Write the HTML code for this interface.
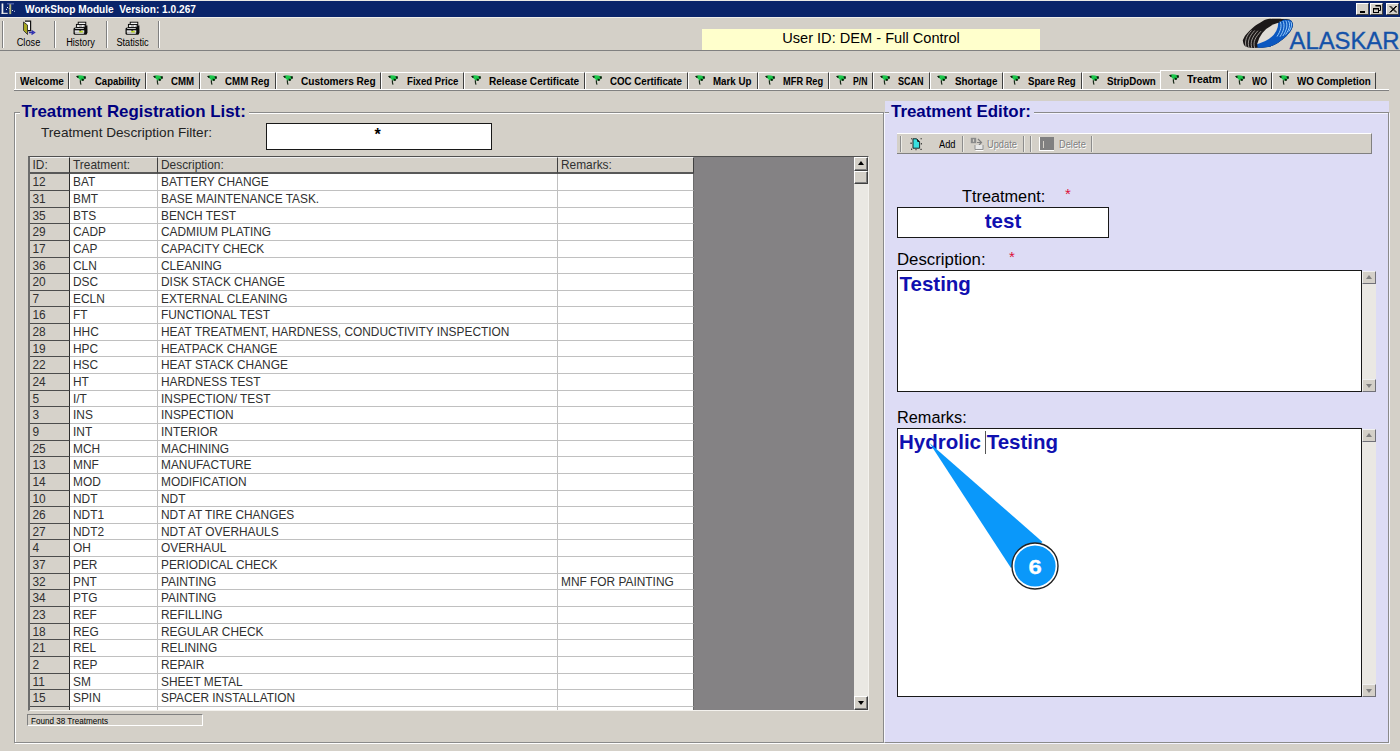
<!DOCTYPE html>
<html>
<head>
<meta charset="utf-8">
<title>WorkShop Module</title>
<style>
html,body{margin:0;padding:0;}
body{width:1400px;height:751px;overflow:hidden;background:#d4d0c8;font-family:"Liberation Sans",sans-serif;position:relative;color:#000;}
.abs{position:absolute;}
#titlebar{left:0;top:0;width:1400px;height:18px;background:#0a246a;border-top:1px solid #eceae6;border-bottom:1px solid #f0eeea;box-sizing:border-box;}
#titletext{left:25px;top:2.5px;font-size:10.9px;font-weight:bold;color:#fff;line-height:13px;white-space:nowrap;transform:scaleX(0.93);transform-origin:0 0;}
.wbtn{top:3px;width:13px;height:12px;background:#d4d0c8;box-sizing:border-box;border:1px solid;border-color:#fff #404040 #404040 #fff;}
#toolbar{left:0;top:18px;width:1400px;height:32px;background:#d4d0c8;border-bottom:1px solid #808080;}
.tsep{top:21px;width:1px;height:27px;background:#808080;border-right:1px solid #fff;}
.tlabel{font-size:10px;line-height:11px;color:#000;text-align:center;white-space:nowrap;transform:scaleX(0.92);}
#userbox{left:702px;top:28.5px;width:338px;height:21.5px;background:#ffffcc;text-align:center;font-size:14.6px;line-height:18px;color:#000;}
/* tabs */
.tab{top:72px;height:17px;box-sizing:border-box;background:#d4d0c8;border-left:1px solid #fff;border-top:1px solid #fff;border-right:1px solid #404040;font-size:10.3px;font-weight:bold;line-height:17px;white-space:nowrap;color:#000;}
.tab span{position:absolute;top:0;transform-origin:0 0;}
.tab svg{position:absolute;left:6px;top:2px;}
#tabline{left:14px;top:89px;width:1375px;height:1px;background:#fff;border-bottom:1px solid #808080;}
/* group boxes */
.grp{box-sizing:border-box;border:1px solid #8a8a8a;box-shadow:1px 1px 0 #fff, inset 1px 1px 0 #fff;}
.ghead{font-size:16.9px;font-weight:bold;color:#000080;line-height:20px;white-space:nowrap;padding:0 3px 0 2px;}
/* table */
#grid{left:28px;top:156px;width:841px;height:555px;background:#848284;box-sizing:border-box;border-top:1px solid #505050;border-left:2px solid #6c6c6c;border-right:1px solid #f4f2ee;border-bottom:1px solid #f4f2ee;overflow:hidden;}
.row{position:absolute;left:0;height:16.645px;width:664px;}
.c{position:absolute;top:0;height:100%;box-sizing:border-box;font-size:11.9px;line-height:16px;color:#303030;white-space:nowrap;overflow:hidden;padding-left:3px;}
.c0{left:0;width:40px;background:#d6d2ca;border-right:1px solid #2c2c2c;border-bottom:1px solid #4c4c4c;line-height:16px;padding-left:2.5px;}
.c1{left:40px;width:88px;padding-left:3px;background:#fff;border-right:1px solid #c0c0c0;border-bottom:1px solid #c0c0c0;}
.c2{left:128px;width:400px;padding-left:3px;background:#fff;border-right:1px solid #c0c0c0;border-bottom:1px solid #c0c0c0;}
.c3{left:528px;width:136px;padding-left:3px;background:#fff;border-right:1px solid #6c6c6c;border-bottom:1px solid #c0c0c0;}
.hrow .c{background:#d4d0c8;border-right:1px solid #404040;border-bottom:2px solid #585858;border-top:1px solid #f0f0f0;line-height:15px;}
.hrow .c0{border-right:1px solid #2c2c2c;line-height:15px;}
/* scrollbars */
.sb{background:#eae8e3;}
.sbtn{box-sizing:border-box;background:#d4d0c8;border:1px solid;border-color:#fff #404040 #404040 #fff;box-shadow:inset -1px -1px 0 #808080;}
/* right panel */
#rpanel{left:885px;top:100.6px;width:504px;height:642.4px;background:#dddcf5;}
.lbl14{font-size:14.5px;line-height:17px;color:#000;white-space:nowrap;}
.red{color:#dc1038;font-size:15px;line-height:16px;}
.inp{box-sizing:border-box;background:#fff;border:1px solid #181818;}
.bt{font-weight:bold;color:#1010b0;font-size:20.5px;line-height:24px;white-space:nowrap;}

.msep{top:136px;width:1px;height:16px;background:#8c8c8c;border-right:1px solid #ecebe6;}
.mlabel{top:138.7px;font-size:10.2px;line-height:12px;white-space:nowrap;transform:scaleX(0.91);transform-origin:0 0;}
.dis{color:#808080;text-shadow:1px 1px 0 #fff;}
.lbl{font-size:16.3px;line-height:20px;color:#000;white-space:nowrap;}
.sbtn2{width:13.5px;height:13px;box-sizing:border-box;background:#d4d0c8;border:1px solid;border-color:#f0f0f0 #707078 #707078 #f0f0f0;}
.au{left:3px;top:3px;width:0;height:0;border-left:3px solid transparent;border-right:3px solid transparent;border-bottom:4px solid #808080;}
.ad{left:3px;top:4px;width:0;height:0;border-left:3px solid transparent;border-right:3px solid transparent;border-top:4px solid #808080;}
</style>
</head>
<body>
<!-- TITLE BAR -->
<div id="titlebar" class="abs"></div>
<div id="titletext" class="abs">WorkShop Module&nbsp; Version: 1.0.267</div>
<!-- TOOLBAR -->
<div id="toolbar" class="abs"></div>
<div class="abs tsep" style="left:2px"></div>
<div class="abs tsep" style="left:54px"></div>
<div class="abs tsep" style="left:106px"></div>
<div class="abs tsep" style="left:158px"></div>
<!-- app icon -->
<svg class="abs" style="left:0px;top:2px" width="17" height="14" viewBox="0 0 17 14">
<rect x="1.6" y="1.5" width="1.7" height="10.4" fill="#f0f0f0"/><rect x="1.6" y="10.8" width="6.1" height="1.1" fill="#e8e8e8"/>
<rect x="9.3" y="2" width="1.9" height="10.1" fill="#b4b478"/><rect x="7" y="1.2" width="7" height="1.2" fill="#5868b0"/>
<g fill="#e8e8ff"><rect x="7" y="5" width="1" height="1"/><rect x="6" y="6.9" width="1" height="1"/><rect x="8.8" y="6" width="0.8" height="0.9"/><rect x="12" y="8" width="1" height="1"/><rect x="14" y="8.8" width="0.8" height="1"/></g>
</svg>
<!-- Close icon (door) -->
<svg class="abs" style="left:22px;top:20px" width="15" height="16" viewBox="0 0 15 16">
<path d="M3 1.2 H8.6 V10.6 H6" fill="#fff" stroke="#111" stroke-width="1.2"/>
<path d="M1.5 2 L5.5 5 V14.5 L1.5 10.5 Z" fill="#a8a820" stroke="#333" stroke-width="0.9"/>
<path d="M7 12.5 H11 M9.5 10.5 L12.5 12.5 L9.5 14.5" fill="none" stroke="#3030b0" stroke-width="1.4"/>
</svg>
<div class="abs tlabel" style="left:3px;top:36.7px;width:51px">Close</div>
<!-- printer icons -->
<svg class="abs" style="left:72px;top:21px" width="17" height="15" viewBox="0 0 17 15"><use href="#prn"/></svg>
<div class="abs tlabel" style="left:55px;top:36.7px;width:51px">History</div>
<svg class="abs" style="left:124px;top:21px" width="17" height="15" viewBox="0 0 17 15"><use href="#prn"/></svg>
<div class="abs tlabel" style="left:107px;top:36.7px;width:51px">Statistic</div>
<svg width="0" height="0" style="position:absolute"><defs>
<g id="prn">
<rect x="6.2" y="1.2" width="7.6" height="2.6" fill="#fff" stroke="#000" stroke-width="0.9"/>
<rect x="4.4" y="3.4" width="8.8" height="3" fill="#b8b8b8" stroke="#000" stroke-width="0.9"/>
<path d="M5.2 4.2 H7 V5.8 H5.2 Z M10 4.2 H12 L11 5.8 H10 Z" fill="#fff"/>
<path d="M13 4.4 H15.4 V12 H13 Z" fill="#111"/>
<rect x="1.5" y="6.4" width="13.6" height="7.4" rx="1.6" fill="#0c0c0c"/>
<rect x="3.2" y="7.2" width="8.6" height="0.8" fill="#f0f0f0"/>
<path d="M2.8 9.6 H12.2 V12 Q12.2 13 11 13 H4 Q2.8 13 2.8 12 Z" fill="#d4d4d4"/>
<path d="M2.8 9.6 H12.2 V10.4 H2.8 Z" fill="#f4f4f4"/>
<rect x="7.2" y="9.8" width="3.6" height="1.8" fill="#c4e020"/>
<path d="M6.8 9.2 H9.6 L8.2 10.2 Z" fill="#0c0c0c"/>
<path d="M3 12 H12" stroke="#909090" stroke-width="0.6"/>
</g></defs></svg>
<!-- window buttons -->
<div class="abs wbtn" style="left:1356px"><div class="abs" style="left:3px;top:7px;width:5px;height:2px;background:#000"></div></div>
<div class="abs wbtn" style="left:1370px">
<svg class="abs" style="left:1px;top:1px" width="10" height="9" viewBox="0 0 10 9"><path d="M3.5 0.5 H8.5 V5.5 H7" fill="none" stroke="#000"/><path d="M3.5 1 H8.5" stroke="#000"/><rect x="1.5" y="3.5" width="5" height="4" fill="none" stroke="#000"/><path d="M1.5 4 H6.5" stroke="#000"/></svg></div>
<div class="abs wbtn" style="left:1386px;">
<svg class="abs" style="left:2px;top:2px" width="8" height="7" viewBox="0 0 8 7"><path d="M0.5 0 L7 6.5 M1.5 0 L8 6.5 M7 0 L0.5 6.5 M8 0 L1.5 6.5" stroke="#000" stroke-width="0.9"/></svg></div>
<!-- logo -->
<svg class="abs" style="left:1240px;top:18px" width="160" height="33" viewBox="1240 18 160 33">
<defs>
<clipPath id="lgo"><path d="M1242.9 41.1 C1243.1 42.2 1243.4 44.6 1244.6 45.7 C1245.8 46.8 1247.7 47.4 1250.3 47.7 C1252.9 48.1 1257.0 47.9 1260.0 47.8 C1263.0 47.7 1265.3 47.7 1268.0 47.1 C1270.7 46.5 1273.2 45.6 1276.0 44.0 C1278.8 42.4 1282.2 39.8 1284.6 37.7 C1287.0 35.6 1288.9 33.4 1290.3 31.4 C1291.7 29.4 1292.6 27.3 1292.9 25.7 C1293.2 24.1 1292.6 22.8 1292.0 21.7 C1291.4 20.6 1290.8 19.9 1289.1 19.4 C1287.4 18.9 1285.2 18.9 1281.7 18.9 C1278.2 18.8 1271.3 18.6 1268.0 19.1 C1264.7 19.6 1264.2 20.3 1261.7 21.7 C1259.2 23.1 1255.7 25.3 1253.1 27.4 C1250.5 29.5 1247.9 32.4 1246.3 34.3 C1244.7 36.2 1244.0 37.8 1243.4 38.9 C1242.8 40.0 1242.7 40.0 1242.9 41.1 Z"/></clipPath>
</defs>
<g clip-path="url(#lgo)">
<rect x="1240" y="18" width="60" height="33" fill="#1c1818"/>
<path d="M1300 18 H1291 L1289 19.8 L1284 19.6 L1278.3 22.9 L1257.1 44 L1258.2 51 H1300 Z" fill="#0c58c0"/>
<g fill="none" stroke="#d4d0c8" stroke-width="0.7">
<path d="M1251.5 30.5 C1246.5 35.5 1244.2 41.5 1246.3 47.5"/>
<path d="M1254.7 30.5 C1249.5 36 1247 41.5 1249.1 48"/>
<path d="M1257.9 30.7 C1252.5 36.5 1249.8 42 1251.9 48"/>
<path d="M1261 31.2 C1255.5 37 1252.6 42 1254.7 48"/>
</g>
<g fill="none" stroke="#a8d8ff" stroke-width="0.9">
<path d="M1280 21.5 C1282.2 25 1280.8 31 1277 36.5"/>
<path d="M1282.9 21 C1285.2 25 1283.8 31 1279.9 36.8"/>
<path d="M1285.8 20.6 C1288.1 25 1286.6 30.5 1282.8 36"/>
<path d="M1288.4 20.8 C1290.8 24.5 1289.4 29.5 1285.6 34.5"/>
<path d="M1290.8 21.8 C1292.4 24.5 1291.4 28 1288.8 31.5"/>
</g>
</g>
<path d="M1257.1 44.2 Q1261 28 1278.3 22.7 Q1278 38 1257.1 44.2 Z" fill="#e0dcd6"/>
<text x="1289.5" y="48.6" font-family="Liberation Sans, sans-serif" font-size="23" fill="#1452a8" stroke="#1452a8" stroke-width="0.35" textLength="110" lengthAdjust="spacingAndGlyphs">ALASKAR</text>
</svg>
<div id="userbox" class="abs">User ID: DEM - Full Control</div>
<!-- TABS -->
<div class="abs tab" style="left:15.0px;width:54.0px;"><span style="left:3.55px;transform:scaleX(0.975)">Welcome</span></div>
<div class="abs tab" style="left:69.0px;width:76.5px;"><svg width="11" height="11" viewBox="0 0 11 11"><path d="M0.6 1.2 L3 0.2 L6 0.6 L9.6 1.6 L8.4 4.4 L6.4 5.6 L4.6 5.6 L2.6 3.4 Z" fill="#1cc84c"/><path d="M0 0.9 L2.3 0.7 L2.8 2.6 L1.6 2.9 Z M7.6 1.2 L10 1.5 L9.6 4 L7.9 3.6 Z M5.6 3.6 L8 4.2 L7.6 5.9 L5.8 5.7 Z" fill="#0a1a0a"/><path d="M4.3 5.2 L4.5 8 L5 9.7" stroke="#1a2a1a" stroke-width="1.2" fill="none"/></svg><span style="left:24.80px;transform:scaleX(0.922)">Capability</span></div>
<div class="abs tab" style="left:145.5px;width:54.5px;"><svg width="11" height="11" viewBox="0 0 11 11"><path d="M0.6 1.2 L3 0.2 L6 0.6 L9.6 1.6 L8.4 4.4 L6.4 5.6 L4.6 5.6 L2.6 3.4 Z" fill="#1cc84c"/><path d="M0 0.9 L2.3 0.7 L2.8 2.6 L1.6 2.9 Z M7.6 1.2 L10 1.5 L9.6 4 L7.9 3.6 Z M5.6 3.6 L8 4.2 L7.6 5.9 L5.8 5.7 Z" fill="#0a1a0a"/><path d="M4.3 5.2 L4.5 8 L5 9.7" stroke="#1a2a1a" stroke-width="1.2" fill="none"/></svg><span style="left:24.55px;transform:scaleX(0.941)">CMM</span></div>
<div class="abs tab" style="left:200.0px;width:75.5px;"><svg width="11" height="11" viewBox="0 0 11 11"><path d="M0.6 1.2 L3 0.2 L6 0.6 L9.6 1.6 L8.4 4.4 L6.4 5.6 L4.6 5.6 L2.6 3.4 Z" fill="#1cc84c"/><path d="M0 0.9 L2.3 0.7 L2.8 2.6 L1.6 2.9 Z M7.6 1.2 L10 1.5 L9.6 4 L7.9 3.6 Z M5.6 3.6 L8 4.2 L7.6 5.9 L5.8 5.7 Z" fill="#0a1a0a"/><path d="M4.3 5.2 L4.5 8 L5 9.7" stroke="#1a2a1a" stroke-width="1.2" fill="none"/></svg><span style="left:24.30px;transform:scaleX(0.946)">CMM Reg</span></div>
<div class="abs tab" style="left:275.5px;width:105.5px;"><svg width="11" height="11" viewBox="0 0 11 11"><path d="M0.6 1.2 L3 0.2 L6 0.6 L9.6 1.6 L8.4 4.4 L6.4 5.6 L4.6 5.6 L2.6 3.4 Z" fill="#1cc84c"/><path d="M0 0.9 L2.3 0.7 L2.8 2.6 L1.6 2.9 Z M7.6 1.2 L10 1.5 L9.6 4 L7.9 3.6 Z M5.6 3.6 L8 4.2 L7.6 5.9 L5.8 5.7 Z" fill="#0a1a0a"/><path d="M4.3 5.2 L4.5 8 L5 9.7" stroke="#1a2a1a" stroke-width="1.2" fill="none"/></svg><span style="left:24.30px;transform:scaleX(0.981)">Customers Reg</span></div>
<div class="abs tab" style="left:381.0px;width:83.0px;"><svg width="11" height="11" viewBox="0 0 11 11"><path d="M0.6 1.2 L3 0.2 L6 0.6 L9.6 1.6 L8.4 4.4 L6.4 5.6 L4.6 5.6 L2.6 3.4 Z" fill="#1cc84c"/><path d="M0 0.9 L2.3 0.7 L2.8 2.6 L1.6 2.9 Z M7.6 1.2 L10 1.5 L9.6 4 L7.9 3.6 Z M5.6 3.6 L8 4.2 L7.6 5.9 L5.8 5.7 Z" fill="#0a1a0a"/><path d="M4.3 5.2 L4.5 8 L5 9.7" stroke="#1a2a1a" stroke-width="1.2" fill="none"/></svg><span style="left:24.55px;transform:scaleX(0.935)">Fixed Price</span></div>
<div class="abs tab" style="left:464.0px;width:120.5px;"><svg width="11" height="11" viewBox="0 0 11 11"><path d="M0.6 1.2 L3 0.2 L6 0.6 L9.6 1.6 L8.4 4.4 L6.4 5.6 L4.6 5.6 L2.6 3.4 Z" fill="#1cc84c"/><path d="M0 0.9 L2.3 0.7 L2.8 2.6 L1.6 2.9 Z M7.6 1.2 L10 1.5 L9.6 4 L7.9 3.6 Z M5.6 3.6 L8 4.2 L7.6 5.9 L5.8 5.7 Z" fill="#0a1a0a"/><path d="M4.3 5.2 L4.5 8 L5 9.7" stroke="#1a2a1a" stroke-width="1.2" fill="none"/></svg><span style="left:24.05px;transform:scaleX(0.978)">Release Certificate</span></div>
<div class="abs tab" style="left:584.5px;width:103.5px;"><svg width="11" height="11" viewBox="0 0 11 11"><path d="M0.6 1.2 L3 0.2 L6 0.6 L9.6 1.6 L8.4 4.4 L6.4 5.6 L4.6 5.6 L2.6 3.4 Z" fill="#1cc84c"/><path d="M0 0.9 L2.3 0.7 L2.8 2.6 L1.6 2.9 Z M7.6 1.2 L10 1.5 L9.6 4 L7.9 3.6 Z M5.6 3.6 L8 4.2 L7.6 5.9 L5.8 5.7 Z" fill="#0a1a0a"/><path d="M4.3 5.2 L4.5 8 L5 9.7" stroke="#1a2a1a" stroke-width="1.2" fill="none"/></svg><span style="left:24.80px;transform:scaleX(0.945)">COC Certificate</span></div>
<div class="abs tab" style="left:688.0px;width:69.5px;"><svg width="11" height="11" viewBox="0 0 11 11"><path d="M0.6 1.2 L3 0.2 L6 0.6 L9.6 1.6 L8.4 4.4 L6.4 5.6 L4.6 5.6 L2.6 3.4 Z" fill="#1cc84c"/><path d="M0 0.9 L2.3 0.7 L2.8 2.6 L1.6 2.9 Z M7.6 1.2 L10 1.5 L9.6 4 L7.9 3.6 Z M5.6 3.6 L8 4.2 L7.6 5.9 L5.8 5.7 Z" fill="#0a1a0a"/><path d="M4.3 5.2 L4.5 8 L5 9.7" stroke="#1a2a1a" stroke-width="1.2" fill="none"/></svg><span style="left:24.30px;transform:scaleX(0.945)">Mark Up</span></div>
<div class="abs tab" style="left:757.5px;width:71.5px;"><svg width="11" height="11" viewBox="0 0 11 11"><path d="M0.6 1.2 L3 0.2 L6 0.6 L9.6 1.6 L8.4 4.4 L6.4 5.6 L4.6 5.6 L2.6 3.4 Z" fill="#1cc84c"/><path d="M0 0.9 L2.3 0.7 L2.8 2.6 L1.6 2.9 Z M7.6 1.2 L10 1.5 L9.6 4 L7.9 3.6 Z M5.6 3.6 L8 4.2 L7.6 5.9 L5.8 5.7 Z" fill="#0a1a0a"/><path d="M4.3 5.2 L4.5 8 L5 9.7" stroke="#1a2a1a" stroke-width="1.2" fill="none"/></svg><span style="left:24.30px;transform:scaleX(0.900)">MFR Reg</span></div>
<div class="abs tab" style="left:829.0px;width:44.0px;"><svg width="11" height="11" viewBox="0 0 11 11"><path d="M0.6 1.2 L3 0.2 L6 0.6 L9.6 1.6 L8.4 4.4 L6.4 5.6 L4.6 5.6 L2.6 3.4 Z" fill="#1cc84c"/><path d="M0 0.9 L2.3 0.7 L2.8 2.6 L1.6 2.9 Z M7.6 1.2 L10 1.5 L9.6 4 L7.9 3.6 Z M5.6 3.6 L8 4.2 L7.6 5.9 L5.8 5.7 Z" fill="#0a1a0a"/><path d="M4.3 5.2 L4.5 8 L5 9.7" stroke="#1a2a1a" stroke-width="1.2" fill="none"/></svg><span style="left:23.30px;transform:scaleX(0.839)">P/N</span></div>
<div class="abs tab" style="left:873.0px;width:56.5px;"><svg width="11" height="11" viewBox="0 0 11 11"><path d="M0.6 1.2 L3 0.2 L6 0.6 L9.6 1.6 L8.4 4.4 L6.4 5.6 L4.6 5.6 L2.6 3.4 Z" fill="#1cc84c"/><path d="M0 0.9 L2.3 0.7 L2.8 2.6 L1.6 2.9 Z M7.6 1.2 L10 1.5 L9.6 4 L7.9 3.6 Z M5.6 3.6 L8 4.2 L7.6 5.9 L5.8 5.7 Z" fill="#0a1a0a"/><path d="M4.3 5.2 L4.5 8 L5 9.7" stroke="#1a2a1a" stroke-width="1.2" fill="none"/></svg><span style="left:24.30px;transform:scaleX(0.879)">SCAN</span></div>
<div class="abs tab" style="left:929.5px;width:73.5px;"><svg width="11" height="11" viewBox="0 0 11 11"><path d="M0.6 1.2 L3 0.2 L6 0.6 L9.6 1.6 L8.4 4.4 L6.4 5.6 L4.6 5.6 L2.6 3.4 Z" fill="#1cc84c"/><path d="M0 0.9 L2.3 0.7 L2.8 2.6 L1.6 2.9 Z M7.6 1.2 L10 1.5 L9.6 4 L7.9 3.6 Z M5.6 3.6 L8 4.2 L7.6 5.9 L5.8 5.7 Z" fill="#0a1a0a"/><path d="M4.3 5.2 L4.5 8 L5 9.7" stroke="#1a2a1a" stroke-width="1.2" fill="none"/></svg><span style="left:24.30px;transform:scaleX(0.950)">Shortage</span></div>
<div class="abs tab" style="left:1003.0px;width:79.0px;"><svg width="11" height="11" viewBox="0 0 11 11"><path d="M0.6 1.2 L3 0.2 L6 0.6 L9.6 1.6 L8.4 4.4 L6.4 5.6 L4.6 5.6 L2.6 3.4 Z" fill="#1cc84c"/><path d="M0 0.9 L2.3 0.7 L2.8 2.6 L1.6 2.9 Z M7.6 1.2 L10 1.5 L9.6 4 L7.9 3.6 Z M5.6 3.6 L8 4.2 L7.6 5.9 L5.8 5.7 Z" fill="#0a1a0a"/><path d="M4.3 5.2 L4.5 8 L5 9.7" stroke="#1a2a1a" stroke-width="1.2" fill="none"/></svg><span style="left:24.30px;transform:scaleX(0.935)">Spare Reg</span></div>
<div class="abs tab" style="left:1082.0px;width:79.0px;"><svg width="11" height="11" viewBox="0 0 11 11"><path d="M0.6 1.2 L3 0.2 L6 0.6 L9.6 1.6 L8.4 4.4 L6.4 5.6 L4.6 5.6 L2.6 3.4 Z" fill="#1cc84c"/><path d="M0 0.9 L2.3 0.7 L2.8 2.6 L1.6 2.9 Z M7.6 1.2 L10 1.5 L9.6 4 L7.9 3.6 Z M5.6 3.6 L8 4.2 L7.6 5.9 L5.8 5.7 Z" fill="#0a1a0a"/><path d="M4.3 5.2 L4.5 8 L5 9.7" stroke="#1a2a1a" stroke-width="1.2" fill="none"/></svg><span style="left:24.30px;transform:scaleX(0.945)">StripDown</span></div>
<div class="abs tab sel" style="left:1160.0px;width:68.0px;top:70px;height:20px;"><svg style="left:8px;top:3px" width="11" height="11" viewBox="0 0 11 11"><path d="M0.6 1.2 L3 0.2 L6 0.6 L9.6 1.6 L8.4 4.4 L6.4 5.6 L4.6 5.6 L2.6 3.4 Z" fill="#1cc84c"/><path d="M0 0.9 L2.3 0.7 L2.8 2.6 L1.6 2.9 Z M7.6 1.2 L10 1.5 L9.6 4 L7.9 3.6 Z M5.6 3.6 L8 4.2 L7.6 5.9 L5.8 5.7 Z" fill="#0a1a0a"/><path d="M4.3 5.2 L4.5 8 L5 9.7" stroke="#1a2a1a" stroke-width="1.2" fill="none"/></svg><span style="left:26.30px;top:0px;transform:scaleX(1.019)">Treatm</span></div>
<div class="abs tab" style="left:1228.0px;width:44.0px;"><svg width="11" height="11" viewBox="0 0 11 11"><path d="M0.6 1.2 L3 0.2 L6 0.6 L9.6 1.6 L8.4 4.4 L6.4 5.6 L4.6 5.6 L2.6 3.4 Z" fill="#1cc84c"/><path d="M0 0.9 L2.3 0.7 L2.8 2.6 L1.6 2.9 Z M7.6 1.2 L10 1.5 L9.6 4 L7.9 3.6 Z M5.6 3.6 L8 4.2 L7.6 5.9 L5.8 5.7 Z" fill="#0a1a0a"/><path d="M4.3 5.2 L4.5 8 L5 9.7" stroke="#1a2a1a" stroke-width="1.2" fill="none"/></svg><span style="left:22.55px;transform:scaleX(0.854)">WO</span></div>
<div class="abs tab" style="left:1272.0px;width:104.0px;"><svg width="11" height="11" viewBox="0 0 11 11"><path d="M0.6 1.2 L3 0.2 L6 0.6 L9.6 1.6 L8.4 4.4 L6.4 5.6 L4.6 5.6 L2.6 3.4 Z" fill="#1cc84c"/><path d="M0 0.9 L2.3 0.7 L2.8 2.6 L1.6 2.9 Z M7.6 1.2 L10 1.5 L9.6 4 L7.9 3.6 Z M5.6 3.6 L8 4.2 L7.6 5.9 L5.8 5.7 Z" fill="#0a1a0a"/><path d="M4.3 5.2 L4.5 8 L5 9.7" stroke="#1a2a1a" stroke-width="1.2" fill="none"/></svg><span style="left:24.30px;transform:scaleX(0.954)">WO Completion</span></div>
<!-- TABLINE -->
<div id="tabline" class="abs"></div>
<!-- LEFT GROUP -->
<div class="abs grp" style="left:14px;top:112px;width:870px;height:631px;"></div>
<div class="abs ghead" style="left:19.5px;top:102px;background:#d4d0c8;">Treatment Registration List:</div>
<div class="abs" style="left:41px;top:124px;font-size:13.6px;line-height:17px;color:#222;white-space:nowrap;">Treatment Description Filter:</div>
<div class="abs inp" style="left:266px;top:123px;width:226px;height:27px;text-align:center;font-size:16px;font-weight:bold;line-height:21px;padding-right:3px;">*</div>
<!-- status -->
<div class="abs" style="left:27px;top:713.5px;width:176px;height:12.5px;box-sizing:border-box;border:1px solid;border-color:#808080 #fff #fff #808080;font-size:8.8px;line-height:12px;padding-left:3px;color:#000;white-space:nowrap;"><span style="display:inline-block;transform:scaleX(0.92);transform-origin:0 0">Found 38 Treatments</span></div>
<!-- GRID -->
<div id="grid" class="abs">
<div class="row hrow" style="top:0;height:17.30px"><div class="c c0">ID:</div><div class="c c1">Treatment:</div><div class="c c2">Description:</div><div class="c c3">Remarks:</div></div>
<div class="row" style="top:17.30px"><div class="c c0">12</div><div class="c c1">BAT</div><div class="c c2">BATTERY CHANGE</div><div class="c c3"></div></div>
<div class="row" style="top:33.95px"><div class="c c0">31</div><div class="c c1">BMT</div><div class="c c2">BASE MAINTENANCE TASK.</div><div class="c c3"></div></div>
<div class="row" style="top:50.59px"><div class="c c0">35</div><div class="c c1">BTS</div><div class="c c2">BENCH TEST</div><div class="c c3"></div></div>
<div class="row" style="top:67.23px"><div class="c c0">29</div><div class="c c1">CADP</div><div class="c c2">CADMIUM PLATING</div><div class="c c3"></div></div>
<div class="row" style="top:83.88px"><div class="c c0">17</div><div class="c c1">CAP</div><div class="c c2">CAPACITY CHECK</div><div class="c c3"></div></div>
<div class="row" style="top:100.52px"><div class="c c0">36</div><div class="c c1">CLN</div><div class="c c2">CLEANING</div><div class="c c3"></div></div>
<div class="row" style="top:117.17px"><div class="c c0">20</div><div class="c c1">DSC</div><div class="c c2">DISK STACK CHANGE</div><div class="c c3"></div></div>
<div class="row" style="top:133.81px"><div class="c c0">7</div><div class="c c1">ECLN</div><div class="c c2">EXTERNAL CLEANING</div><div class="c c3"></div></div>
<div class="row" style="top:150.46px"><div class="c c0">16</div><div class="c c1">FT</div><div class="c c2">FUNCTIONAL TEST</div><div class="c c3"></div></div>
<div class="row" style="top:167.11px"><div class="c c0">28</div><div class="c c1">HHC</div><div class="c c2">HEAT TREATMENT, HARDNESS, CONDUCTIVITY INSPECTION</div><div class="c c3"></div></div>
<div class="row" style="top:183.75px"><div class="c c0">19</div><div class="c c1">HPC</div><div class="c c2">HEATPACK CHANGE</div><div class="c c3"></div></div>
<div class="row" style="top:200.40px"><div class="c c0">22</div><div class="c c1">HSC</div><div class="c c2">HEAT STACK CHANGE</div><div class="c c3"></div></div>
<div class="row" style="top:217.04px"><div class="c c0">24</div><div class="c c1">HT</div><div class="c c2">HARDNESS TEST</div><div class="c c3"></div></div>
<div class="row" style="top:233.69px"><div class="c c0">5</div><div class="c c1">I/T</div><div class="c c2">INSPECTION/ TEST</div><div class="c c3"></div></div>
<div class="row" style="top:250.33px"><div class="c c0">3</div><div class="c c1">INS</div><div class="c c2">INSPECTION</div><div class="c c3"></div></div>
<div class="row" style="top:266.97px"><div class="c c0">9</div><div class="c c1">INT</div><div class="c c2">INTERIOR</div><div class="c c3"></div></div>
<div class="row" style="top:283.62px"><div class="c c0">25</div><div class="c c1">MCH</div><div class="c c2">MACHINING</div><div class="c c3"></div></div>
<div class="row" style="top:300.26px"><div class="c c0">13</div><div class="c c1">MNF</div><div class="c c2">MANUFACTURE</div><div class="c c3"></div></div>
<div class="row" style="top:316.91px"><div class="c c0">14</div><div class="c c1">MOD</div><div class="c c2">MODIFICATION</div><div class="c c3"></div></div>
<div class="row" style="top:333.56px"><div class="c c0">10</div><div class="c c1">NDT</div><div class="c c2">NDT</div><div class="c c3"></div></div>
<div class="row" style="top:350.20px"><div class="c c0">26</div><div class="c c1">NDT1</div><div class="c c2">NDT AT TIRE CHANGES</div><div class="c c3"></div></div>
<div class="row" style="top:366.85px"><div class="c c0">27</div><div class="c c1">NDT2</div><div class="c c2">NDT AT OVERHAULS</div><div class="c c3"></div></div>
<div class="row" style="top:383.49px"><div class="c c0">4</div><div class="c c1">OH</div><div class="c c2">OVERHAUL</div><div class="c c3"></div></div>
<div class="row" style="top:400.13px"><div class="c c0">37</div><div class="c c1">PER</div><div class="c c2">PERIODICAL CHECK</div><div class="c c3"></div></div>
<div class="row" style="top:416.78px"><div class="c c0">32</div><div class="c c1">PNT</div><div class="c c2">PAINTING</div><div class="c c3">MNF FOR PAINTING</div></div>
<div class="row" style="top:433.43px"><div class="c c0">34</div><div class="c c1">PTG</div><div class="c c2">PAINTING</div><div class="c c3"></div></div>
<div class="row" style="top:450.07px"><div class="c c0">23</div><div class="c c1">REF</div><div class="c c2">REFILLING</div><div class="c c3"></div></div>
<div class="row" style="top:466.71px"><div class="c c0">18</div><div class="c c1">REG</div><div class="c c2">REGULAR CHECK</div><div class="c c3"></div></div>
<div class="row" style="top:483.36px"><div class="c c0">21</div><div class="c c1">REL</div><div class="c c2">RELINING</div><div class="c c3"></div></div>
<div class="row" style="top:500.00px"><div class="c c0">2</div><div class="c c1">REP</div><div class="c c2">REPAIR</div><div class="c c3"></div></div>
<div class="row" style="top:516.65px"><div class="c c0">11</div><div class="c c1">SM</div><div class="c c2">SHEET METAL</div><div class="c c3"></div></div>
<div class="row" style="top:533.29px"><div class="c c0">15</div><div class="c c1">SPIN</div><div class="c c2">SPACER INSTALLATION</div><div class="c c3"></div></div>
<div class="row" style="top:549.94px"><div class="c c0"></div><div class="c c1"></div><div class="c c2"></div><div class="c c3"></div></div>
</div>
<!-- RIGHT PANEL -->
<div id="rpanel" class="abs"></div>
<!-- grid scrollbar -->
<div class="abs sb" style="left:853.7px;top:157px;width:14.3px;height:553px;"></div>
<div class="abs sbtn" style="left:853.7px;top:157px;width:14.3px;height:13.5px;"><div class="abs" style="left:3px;top:3px;width:0;height:0;border-left:3.5px solid transparent;border-right:3.5px solid transparent;border-bottom:4px solid #000;"></div></div>
<div class="abs sbtn" style="left:853.7px;top:170.8px;width:14.3px;height:13.7px;"></div>
<div class="abs sbtn" style="left:853.7px;top:696.3px;width:14.3px;height:13.7px;"><div class="abs" style="left:3px;top:4px;width:0;height:0;border-left:3.5px solid transparent;border-right:3.5px solid transparent;border-top:4px solid #000;"></div></div>
<!-- right group -->
<div class="abs grp" style="left:884px;top:112px;width:505px;height:631px;border-left-color:#f8f8ff;box-shadow:1px 1px 0 #f4f4ff, inset 0 1px 0 #f4f4ff;"></div>
<div class="abs ghead" style="left:889px;top:102px;background:#dddcf5;">Treatment Editor:</div>
<!-- mini toolbar -->
<div class="abs" style="left:897px;top:133px;width:475px;height:21px;background:#d4d0c8;box-sizing:border-box;border-bottom:1px solid #808080;border-right:1px solid #808080;border-top:1px solid #fff;"></div>
<div class="abs msep" style="left:900px"></div>
<div class="abs msep" style="left:962px"></div>
<div class="abs msep" style="left:1023px"></div>
<div class="abs msep" style="left:1030px"></div>
<div class="abs msep" style="left:1091px"></div>
<svg class="abs" style="left:908px;top:136px" width="16" height="15" viewBox="0 0 16 15">
<path d="M5 2.8 H8.6 L11.6 5.8 V12.2 H5 Z" fill="#38e0e0" stroke="#1a2a2a" stroke-width="1"/>
<path d="M8.4 2.6 L11.8 6 L9.6 6 Z" fill="#111"/>
<g fill="#222"><rect x="2.4" y="6.6" width="1.4" height="1.2"/><rect x="12.8" y="7.2" width="1.2" height="1.2"/><rect x="3.2" y="2.2" width="1.1" height="1.1"/><rect x="12.6" y="2.2" width="1.1" height="1.1"/><rect x="3" y="12.6" width="1.2" height="1.2"/><rect x="7.4" y="13.2" width="1.2" height="1"/><rect x="12.4" y="12.8" width="1.3" height="1.1"/></g>
</svg>
<div class="abs mlabel" style="left:939px;color:#000">Add</div>
<svg class="abs" style="left:970px;top:137px" width="15" height="14" viewBox="0 0 15 14">
<rect x="0.8" y="0.8" width="5.4" height="5.4" fill="#8a8a8a"/>
<path d="M3.5 2.2 V4.8" stroke="#d4d0c8" stroke-width="1.2"/>
<path d="M8 2 L11.5 5.5 L9 8 M11.5 5.5 H7" fill="none" stroke="#808080" stroke-width="1.2"/>
<path d="M5 8 V12.5 H13 V8" fill="#e8e8e8" stroke="#909090" stroke-width="1"/>
<path d="M5.5 13.5 H13.5" stroke="#fff"/>
</svg>
<div class="abs mlabel dis" style="left:987px">Update</div>
<div class="abs" style="left:1039px;top:137px;width:14px;height:13px;background:#808080;border-bottom:1px solid #fff;border-left:1px solid #fff;box-sizing:content-box;"><div class="abs" style="left:3px;top:4px;width:1px;height:7px;background:#d4d0c8"></div></div>
<div class="abs mlabel dis" style="left:1059px">Delete</div>
<!-- fields -->
<div class="abs lbl" style="left:962px;top:186px;">Ttreatment:</div>
<div class="abs red" style="left:1065px;top:186px;">*</div>
<div class="abs inp" style="left:897px;top:207px;width:212px;height:31px;text-align:center;"><span class="bt" style="line-height:25px">test</span></div>
<div class="abs lbl" style="left:897px;top:249.8px;font-size:16.8px">Description:</div>
<div class="abs red" style="left:1009px;top:249px;">*</div>
<div class="abs inp" style="left:897px;top:270px;width:465px;height:122px;"><span class="abs bt" style="left:1.5px;top:0.5px">Testing</span></div>
<div class="abs lbl" style="left:897px;top:407px;">Remarks:</div>
<div class="abs inp" style="left:897px;top:428px;width:465px;height:269px;"><span class="abs bt" style="left:1px;top:0.5px">Hydrolic Testing</span><div class="abs" style="left:87px;top:2px;width:1px;height:23px;background:#555"></div></div>
<!-- textarea scrollbars -->
<div class="abs sb" style="left:1362px;top:271px;width:13.5px;height:120px;"></div>
<div class="abs sbtn2" style="left:1362px;top:270.6px;"><div class="abs au"></div></div>
<div class="abs sbtn2" style="left:1362px;top:378.8px;"><div class="abs ad"></div></div>
<div class="abs sb" style="left:1362px;top:429px;width:13.5px;height:267px;"></div>
<div class="abs sbtn2" style="left:1362px;top:428.6px;"><div class="abs au"></div></div>
<div class="abs sbtn2" style="left:1362px;top:683.8px;"><div class="abs ad"></div></div>
<!-- callout -->
<svg class="abs" style="left:920px;top:435px" width="150" height="165" viewBox="920 435 150 165">
<path d="M929.5 443 L1042.5 542 L1011 568 Z" fill="#0a98fa"/>
<circle cx="1035" cy="566" r="23" fill="#fff" stroke="#222" stroke-width="1.4"/>
<circle cx="1035" cy="566" r="20.6" fill="#0a98fa"/>
<text x="1035" y="574.2" text-anchor="middle" font-family="Liberation Sans, sans-serif" font-weight="bold" font-size="20.5" fill="#fff" stroke="#fff" stroke-width="0.3" transform="translate(1035 0) scale(1.16 1) translate(-1035 0)">6</text>
</svg>
</body>
</html>
